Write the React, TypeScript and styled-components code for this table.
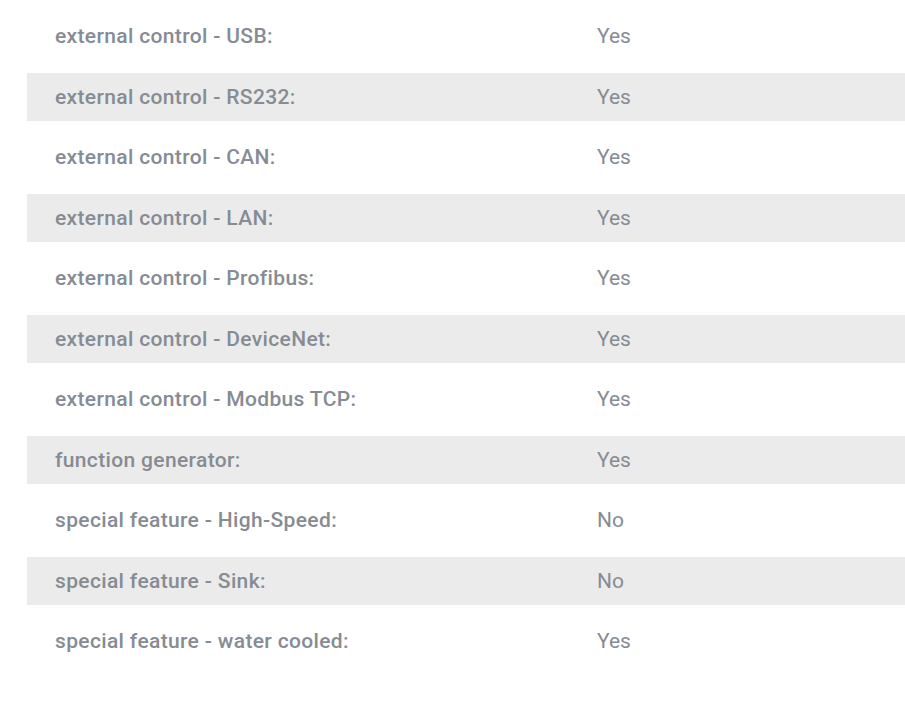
import React from "react";
import styled, { createGlobalStyle } from "styled-components";

const Global = createGlobalStyle`
  html, body { margin: 0; padding: 0; background: #ffffff; }
  body { font-family: Roboto, "Liberation Sans", sans-serif; }
`;

const Page = styled.div`
  padding: 12px 0 0 27px;
  overflow: hidden;
`;

const List = styled.div`
  display: flex;
  flex-direction: column;
  gap: 12.5px;
`;

const Row = styled.div<{ $shaded: boolean }>`
  display: grid;
  grid-template-columns: 542px 1fr;
  align-items: center;
  height: 48px;
  padding: 0 28px;
  background: ${(p) => (p.$shaded ? "#ebebeb" : "transparent")};
`;

const Label = styled.span`
  font-size: 21px;
  font-weight: 500;
  letter-spacing: 0.35px;
  color: #868b94;
`;

const Value = styled.span`
  font-size: 21px;
  font-weight: 400;
  color: #868b94;
`;

const rows: [string, string][] = [
  ["external control - USB:", "Yes"],
  ["external control - RS232:", "Yes"],
  ["external control - CAN:", "Yes"],
  ["external control - LAN:", "Yes"],
  ["external control - Profibus:", "Yes"],
  ["external control - DeviceNet:", "Yes"],
  ["external control - Modbus TCP:", "Yes"],
  ["function generator:", "Yes"],
  ["special feature - High-Speed:", "No"],
  ["special feature - Sink:", "No"],
  ["special feature - water cooled:", "Yes"],
];

export default function App() {
  return (
    <>
      <Global />
      <Page>
        <List>
          {rows.map(([l, v], i) => (
            <Row key={l} $shaded={i % 2 === 1}>
              <Label>{l}</Label>
              <Value>{v}</Value>
            </Row>
          ))}
        </List>
      </Page>
    </>
  );
}
